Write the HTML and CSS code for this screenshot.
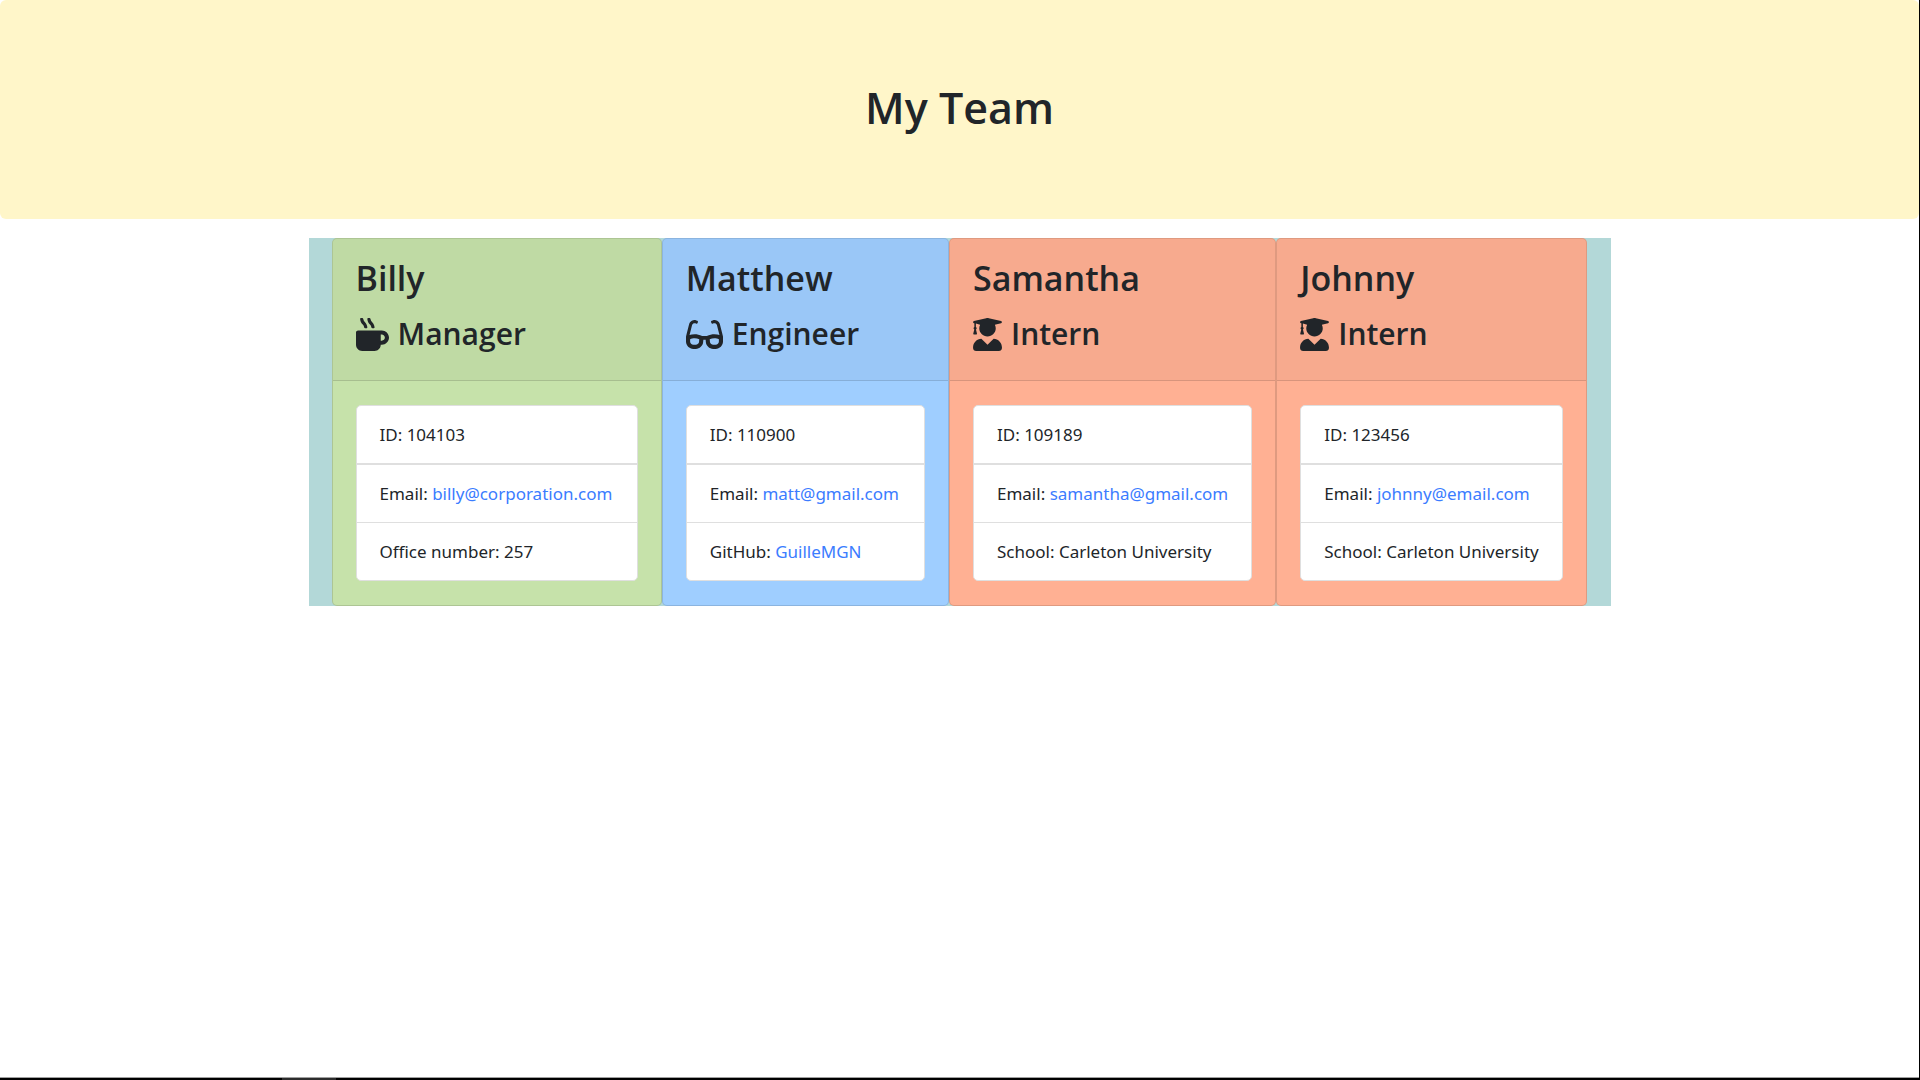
FILE: index.html
```html
<!DOCTYPE html>
<html lang="en">
<head>
<meta charset="utf-8">
<meta name="viewport" content="width=device-width, initial-scale=1">
<title>My Team</title>
<link rel="stylesheet" href="styles.css">
</head>
<body>
<svg class="sprite" aria-hidden="true">
  <symbol id="mug" viewBox="0 0 512 512"><path d="M127.1 146.5c1.3 7.7 8 13.5 16 13.5h16.5c9.8 0 17.6-8.5 16.3-18-3.8-28.2-16.4-54.2-36.6-74.7-14.4-14.7-23.6-33.3-26.4-53.5C111.8 5.9 105 0 96.8 0H80.4C70.6 0 63 8.5 64.1 18c3.9 31.9 18 61.3 40.6 84.4 12 12.2 19.7 27.5 22.4 44.1zm112 0c1.3 7.7 8 13.5 16 13.5h16.5c9.8 0 17.6-8.5 16.3-18-3.8-28.2-16.4-54.2-36.6-74.7-14.4-14.7-23.6-33.3-26.4-53.5C223.8 5.9 217 0 208.8 0h-16.4c-9.8 0-17.5 8.5-16.3 18 3.9 31.9 18 61.3 40.6 84.4 12 12.2 19.7 27.5 22.4 44.1zM400 192H32c-17.7 0-32 14.3-32 32v192c0 53 43 96 96 96h192c53 0 96-43 96-96h16c61.8 0 112-50.2 112-112s-50.2-112-112-112zm0 160h-16v-96h16c26.5 0 48 21.5 48 48s-21.5 48-48 48z"/></symbol>
  <symbol id="glasses" viewBox="0 0 576 512"><path d="M574.1 280.37L528.75 98.66c-5.91-23.7-21.59-44.05-43-55.81-21.44-11.73-46.97-14.11-70.19-6.33l-15.25 5.08c-8.39 2.79-12.92 11.86-10.12 20.24l5.06 15.18c2.79 8.38 11.85 12.91 20.23 10.12l13.18-4.39c10.87-3.62 23-3.57 33.16 1.73 10.29 5.37 17.57 14.56 20.37 25.82l38.46 153.82c-22.19-6.81-49.79-12.46-81.2-12.46-34.77 0-73.98 7.02-114.85 26.74h-73.18c-40.87-19.74-80.08-26.75-114.86-26.75-31.42 0-59.02 5.65-81.21 12.46l38.46-153.83c2.79-11.25 10.09-20.45 20.38-25.81 10.16-5.3 22.28-5.35 33.15-1.73l13.17 4.39c8.38 2.79 17.44-1.74 20.23-10.12l5.06-15.18c2.8-8.38-1.73-17.45-10.12-20.24l-15.25-5.08c-23.22-7.78-48.75-5.41-70.19 6.33-21.41 11.77-37.09 32.11-43 55.8L1.9 280.37A64.218 64.218 0 0 0 0 295.86v70.25C0 429.01 51.58 480 115.2 480h37.12c60.28 0 110.37-45.94 114.88-105.37l2.93-38.63h35.75l2.93 38.63C313.31 434.06 363.4 480 423.68 480h37.12c63.62 0 115.2-50.99 115.2-113.88v-70.25c0-5.23-.64-10.43-1.9-15.5zm-370.72 89.42c-1.97 25.91-24.4 46.21-51.06 46.21H115.2C86.97 416 64 393.62 64 366.11v-37.54c18.12-6.49 43.42-12.92 72.58-12.92 23.86 0 47.26 4.33 69.93 12.92l-3.13 41.22zM512 366.12c0 27.51-22.97 49.88-51.2 49.88h-37.12c-26.67 0-49.1-20.3-51.06-46.21l-3.13-41.22c22.67-8.59 46.08-12.92 69.95-12.92 29.12 0 54.43 6.44 72.55 12.93v37.54z"/></symbol>
  <symbol id="graduate" viewBox="0 0 448 512"><path d="M319.4 320.6L224 416l-95.4-95.4C57.1 323.7 0 382.2 0 454.4v9.6c0 26.5 21.5 48 48 48h352c26.5 0 48-21.5 48-48v-9.6c0-72.2-57.1-130.7-128.6-133.8zM13.6 79.8l6.4 1.5v58.4c-7 4.2-12 11.5-12 20.3 0 8.4 4.6 15.4 11.1 19.7L3.5 242c-1.7 6.9 2.1 14 7.6 14h41.8c5.5 0 9.3-7.1 7.6-14l-15.6-62.3C51.4 175.4 56 168.4 56 160c0-8.8-5-16.1-12-20.3V87.1l66 15.9c-8.6 17.2-14 36.4-14 57 0 70.7 57.3 128 128 128s128-57.3 128-128c0-20.6-5.3-39.8-14-57l96.3-23.2c18.2-4.4 18.2-27.1 0-31.5l-190.4-46c-13-3.1-26.7-3.1-39.7 0L13.6 48.2c-18.1 4.4-18.1 27.2 0 31.6z"/></symbol>
</svg>
<header class="banner"><h1>My Team</h1></header>
<main class="team">
  <article class="card manager">
    <div class="card-header">
      <h2>Billy</h2>
      <h3><svg class="icon" aria-hidden="true"><use href="#mug"/></svg>Manager</h3>
    </div>
    <div class="card-body">
      <ul class="details">
        <li>ID: 104103</li>
        <li>Email: <a href="mailto:billy@corporation.com">billy@corporation.com</a></li>
        <li>Office number: 257</li>
      </ul>
    </div>
  </article>
  <article class="card engineer">
    <div class="card-header">
      <h2>Matthew</h2>
      <h3><svg class="icon icon-wide" aria-hidden="true"><use href="#glasses"/></svg>Engineer</h3>
    </div>
    <div class="card-body">
      <ul class="details">
        <li>ID: 110900</li>
        <li>Email: <a href="mailto:matt@gmail.com">matt@gmail.com</a></li>
        <li>GitHub: <a href="https://github.com/GuilleMGN">GuilleMGN</a></li>
      </ul>
    </div>
  </article>
  <article class="card intern">
    <div class="card-header">
      <h2>Samantha</h2>
      <h3><svg class="icon icon-narrow" aria-hidden="true"><use href="#graduate"/></svg>Intern</h3>
    </div>
    <div class="card-body">
      <ul class="details">
        <li>ID: 109189</li>
        <li>Email: <a href="mailto:samantha@gmail.com">samantha@gmail.com</a></li>
        <li>School: Carleton University</li>
      </ul>
    </div>
  </article>
  <article class="card intern">
    <div class="card-header">
      <h2>Johnny</h2>
      <h3><svg class="icon icon-narrow" aria-hidden="true"><use href="#graduate"/></svg>Intern</h3>
    </div>
    <div class="card-body">
      <ul class="details">
        <li>ID: 123456</li>
        <li>Email: <a href="mailto:johnny@email.com">johnny@email.com</a></li>
        <li>School: Carleton University</li>
      </ul>
    </div>
  </article>
</main>
<footer class="edge"><div class="edge-mark"></div></footer>
</body>
</html>
```
FILE: styles.css
```css
* {
  box-sizing: border-box;
}

body {
  display: flex;
  flex-direction: column;
  min-height: 100vh;
  margin: 0;
  border-right: 1px solid #000;
  background: #fff;
  color: #212529;
  font-family: "Noto Sans", "Open Sans", sans-serif;
  font-size: 17px;
  line-height: 28px;
}

.sprite {
  display: none;
}

.banner {
  padding: 78px 24px 81px;
  border-radius: 6px;
  background: #fff6c9;
  text-align: center;
}

h1,
h2,
h3 {
  margin: 0;
  font-family: "Open Sans", "Noto Sans", sans-serif;
  font-weight: 600;
}

h1 {
  font-size: 43px;
  line-height: 60px;
}

h2 {
  margin-bottom: 12px;
  font-size: 34px;
  line-height: 44px;
}

h3 {
  display: flex;
  align-items: center;
  gap: 9px;
  margin-bottom: 6px;
  font-size: 30px;
  line-height: 44px;
}

.icon {
  width: 33px;
  height: 33px;
  fill: currentColor;
}

.icon-wide {
  width: 37px;
}

.icon-narrow {
  width: 29px;
}

.team {
  display: grid;
  grid-template-columns: 330fr 287fr 327fr 311fr;
  width: 100%;
  max-width: 1302px;
  margin: 19px auto 0;
  padding: 0 23px;
  background: #b3d8d8;
}

.card {
  border: 1px solid rgba(0, 0, 0, 0.125);
  border-radius: 5px;
  overflow: hidden;
}

.manager {
  background-color: #c6e2aa;
}

.engineer {
  background-color: #9fceff;
}

.intern {
  background-color: #ffb093;
}

.card-header {
  padding: 17px 23px 18px;
  border-bottom: 1px solid rgba(0, 0, 0, 0.125);
  background: rgba(0, 0, 0, 0.03);
}

.card-body {
  padding: 24px 23px;
}

.details {
  margin: 0;
  padding: 0;
  border: 1px solid #dfdfdf;
  border-radius: 5px;
  background: #fff;
  list-style: none;
}

.details li {
  padding: 15px 23px 14px;
  white-space: nowrap;
}

.details li + li {
  border-top: 1px solid #dfdfdf;
}

.details li:first-child {
  border-bottom: 1px solid #dfdfdf;
}

a {
  color: #3b7cff;
  text-decoration: none;
}

.edge {
  margin-top: auto;
  padding-left: 282px;
  border-top: 1px solid #a0a0a0;
  background: #000;
}

.edge-mark {
  width: 54px;
  height: 2px;
  background: #2c2c2c;
}
```
